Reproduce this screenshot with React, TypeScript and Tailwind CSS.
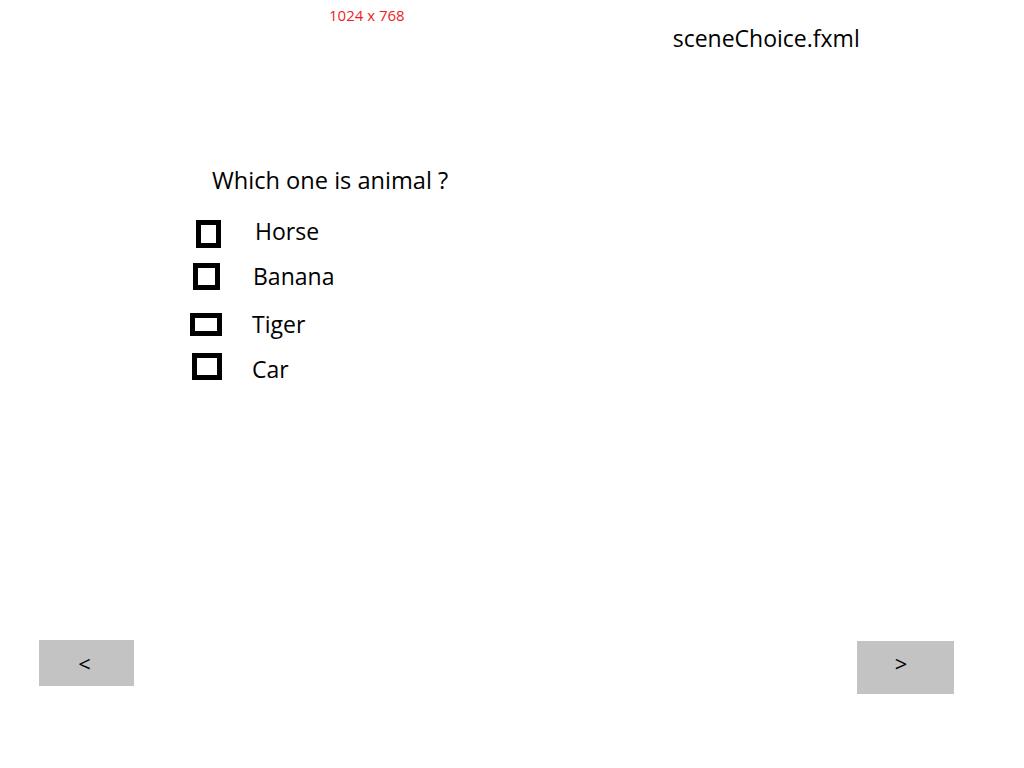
const options = [
  { label: "Horse", box: "ml-[196px] w-[25px] h-[28px]", text: "ml-[34px] mb-[6px]" },
  { label: "Banana", box: "ml-[193px] w-[27px] h-[27px]", text: "ml-[33px]" },
  { label: "Tiger", box: "ml-[190px] w-[32px] h-[23px]", text: "ml-[30px]" },
  { label: "Car", box: "ml-[192px] w-[30px] h-[27px]", text: "ml-[30px] mt-[6px]" },
];

const rowSpacing = ["mt-[24px]", "mt-[12px]", "mt-[18px]", "mt-[12px]"];

export default function App() {
  return (
    <div className="w-[1024px] h-[768px] bg-white flex flex-col text-black font-['Open_Sans',sans-serif]">
      {/* header */}
      <div className="flex items-start h-[60px]">
        <span className="ml-[329px] mt-[5px] text-[15px] leading-[20px] text-[#ed1c24]">1024 x 768</span>
        <span className="ml-[268px] mt-[22px] text-[23px] leading-[32px]">sceneChoice.fxml</span>
      </div>

      {/* question */}
      <div className="mt-[105px] ml-[212px] text-[23.6px] leading-[30px]">Which one is animal ?</div>

      {/* choices */}
      <div className="flex flex-col">
        {options.map((opt, i) => (
          <div key={opt.label} className={`flex items-center h-[30px] ${rowSpacing[i]}`}>
            <div className={`border-[5px] border-black bg-white ${opt.box}`} />
            <span className={`text-[23px] leading-[30px] ${opt.text}`}>{opt.label}</span>
          </div>
        ))}
      </div>

      {/* navigation */}
      <div className="mt-auto mb-[74px] flex items-start justify-between">
        <button className="ml-[39px] w-[95px] h-[46px] bg-[#c3c3c3] flex items-center justify-center pr-[4px] text-[22px] leading-none">
          &lt;
        </button>
        <button className="mr-[70px] mt-[1px] w-[97px] h-[53px] bg-[#c3c3c3] flex items-center justify-center pr-[9px] pb-[9px] text-[22px] leading-none">
          &gt;
        </button>
      </div>
    </div>
  );
}
